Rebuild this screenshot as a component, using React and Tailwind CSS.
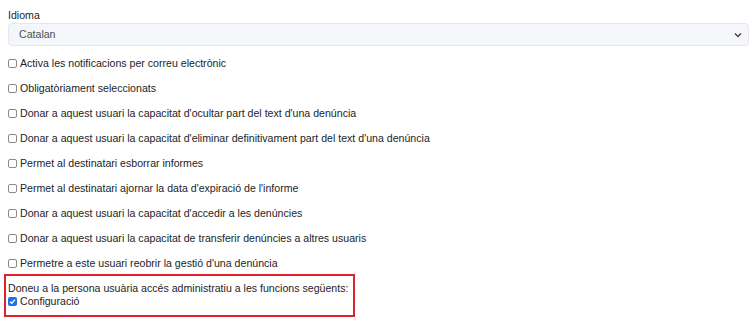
import React from "react";

const items = [
  "Activa les notificacions per correu electrònic",
  "Obligatòriament seleccionats",
  "Donar a aquest usuari la capacitat d'ocultar part del text d'una denúncia",
  "Donar a aquest usuari la capacitat d'eliminar definitivament part del text d'una denúncia",
  "Permet al destinatari esborrar informes",
  "Permet al destinatari ajornar la data d'expiració de l'informe",
  "Donar a aquest usuari la capacitat d'accedir a les denúncies",
  "Donar a aquest usuari la capacitat de transferir denúncies a altres usuaris",
  "Permetre a este usuari reobrir la gestió d'una denúncia",
];

function Box({ checked }) {
  return checked ? (
    <span className="inline-flex w-[9px] h-[9px] rounded-[2px] bg-[#1a73e8] items-center justify-center mr-[3px] shrink-0">
      <svg width="7" height="7" viewBox="0 0 8 8">
        <path d="M1.3 4.2 L3.2 6 L6.8 1.8" fill="none" stroke="white" strokeWidth="1.5" />
      </svg>
    </span>
  ) : (
    <span className="inline-block w-[9px] h-[9px] rounded-[2px] border border-[#8a8a8a] bg-white mr-[3px] shrink-0" />
  );
}

export default function App() {
  return (
    <div className="w-[752px] h-[322px] bg-white text-[#212529] text-[10.6px] leading-[13px]" style={{ fontFamily: '"Liberation Sans", Arial, sans-serif' }}>
      <div className="pt-[9px] px-[8px]">
        <div className="mb-[1px]">Idioma</div>
        <div className="h-[23px] w-[741px] rounded-[4px] border border-[#e4e7ec] bg-[#f5f6fa] flex items-center justify-between pl-[10px] pr-[6px] text-[#495057]">
          <span>Catalan</span>
          <svg width="8" height="6" viewBox="0 0 8 6">
            <path d="M1 1.5 L4 4.5 L7 1.5" fill="none" stroke="#444" strokeWidth="1.4" />
          </svg>
        </div>
        <div className="mt-[11px] flex flex-col gap-[12px]">
          {items.map((t) => (
            <div key={t} className="flex items-center h-[13px] whitespace-nowrap">
              <Box />
              <span>{t}</span>
            </div>
          ))}
        </div>
      </div>
      <div className="mt-[4px] ml-[4px] w-[351px] h-[43px] border-2 border-[#e0202b] pl-[2px] pt-[6px] whitespace-nowrap">
        <div className="h-[13px]">Doneu a la persona usuària accés administratiu a les funcions següents:</div>
        <div className="flex items-center h-[13px]">
          <Box checked />
          <span>Configuració</span>
        </div>
      </div>
    </div>
  );
}
